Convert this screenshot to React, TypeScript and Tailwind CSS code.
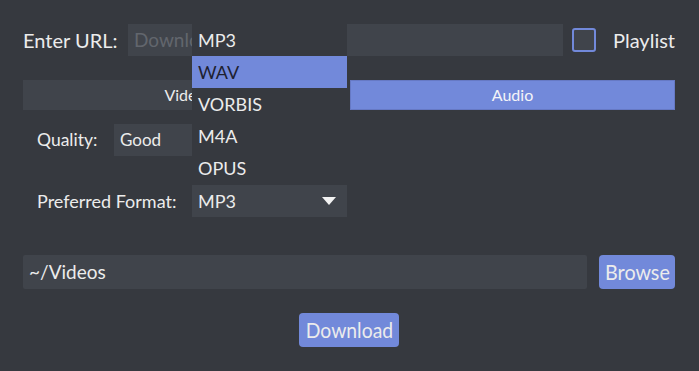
import React from "react";

export default function App() {
  const items = ["MP3", "WAV", "VORBIS", "M4A", "OPUS"];
  return (
    <div className="relative w-[699px] h-[371px] overflow-hidden bg-[#36393f] text-[#ececec] font-['Lato',sans-serif]">
      <div className="flex flex-col px-[23px] pt-[24px]">
        {/* URL row */}
        <div className="flex items-center h-[32px]">
          <div className="w-[105px] text-[20px] leading-none">Enter URL:</div>
          <div className="w-[435px] h-[32px] bg-[#40444b] flex items-center pl-[6px] text-[19px] text-[#62666d] overflow-hidden whitespace-nowrap">
            Download URL
          </div>
          <div className="ml-[9px] w-[24px] h-[24px] border-2 border-[#7289da] rounded-[3px] bg-[#40444b]" />
          <div className="ml-[17px] text-[20px] leading-none">Playlist</div>
        </div>

        {/* Tabs */}
        <div className="flex gap-[3px] mt-[24px] h-[30px]">
          <div className="w-[324px] bg-[#40444b] flex items-center justify-center text-[16px]">Video</div>
          <div className="w-[325px] bg-[#7289da] border border-[#6679c4] flex items-center justify-center text-[16px] text-[#f4f4f8]">Audio</div>
        </div>

        {/* Quality */}
        <div className="flex items-center mt-[14px] h-[32px] pl-[14px]">
          <div className="w-[77px] text-[17.5px] leading-none">Quality:</div>
          <div className="w-[200px] h-[32px] bg-[#40444b] flex items-center pl-[6px] text-[17px]">Good</div>
        </div>

        {/* Preferred format */}
        <div className="flex items-center mt-[29px] h-[32px] pl-[14px]">
          <div className="w-[155px] text-[18px] leading-none">Preferred Format:</div>
          <div className="w-[155px] h-[32px] bg-[#40444b] flex items-center justify-between pl-[6px] pr-[11px] text-[18px]">
            <span>MP3</span>
            <svg width="14" height="9" viewBox="0 0 14 9">
              <polygon points="0,0 14,0 7,8" fill="#f2f2f2" />
            </svg>
          </div>
        </div>

        {/* Path */}
        <div className="flex items-center mt-[38px] h-[34px]">
          <div className="w-[564px] h-[34px] bg-[#40444b] rounded-[2px] flex items-center pl-[6px] text-[19px]">~/Videos</div>
          <div className="ml-[12px] w-[76px] h-[34px] bg-[#7289da] rounded-[4px] flex items-center justify-center">
            <span className="text-[21px] inline-block scale-x-[0.94]">Browse</span>
          </div>
        </div>

        {/* Download */}
        <div className="flex justify-center mt-[24px]">
          <div className="ml-[-1px] w-[100px] h-[34px] bg-[#7289da] rounded-[4px] flex items-center justify-center">
            <span className="text-[21px] inline-block scale-x-[0.92]">Download</span>
          </div>
        </div>
      </div>

      {/* Open dropdown */}
      <div className="absolute left-[192px] top-[24px] w-[155px] bg-[#36393f] flex flex-col">
        {items.map((it) => (
          <div
            key={it}
            className={
              it === "WAV"
                ? "h-[32px] flex items-center pl-[6px] text-[18px] bg-[#7289da] text-[#1e2130]"
                : "h-[32px] flex items-center pl-[6px] text-[18px]"
            }
          >
            {it}
          </div>
        ))}
      </div>
    </div>
  );
}
